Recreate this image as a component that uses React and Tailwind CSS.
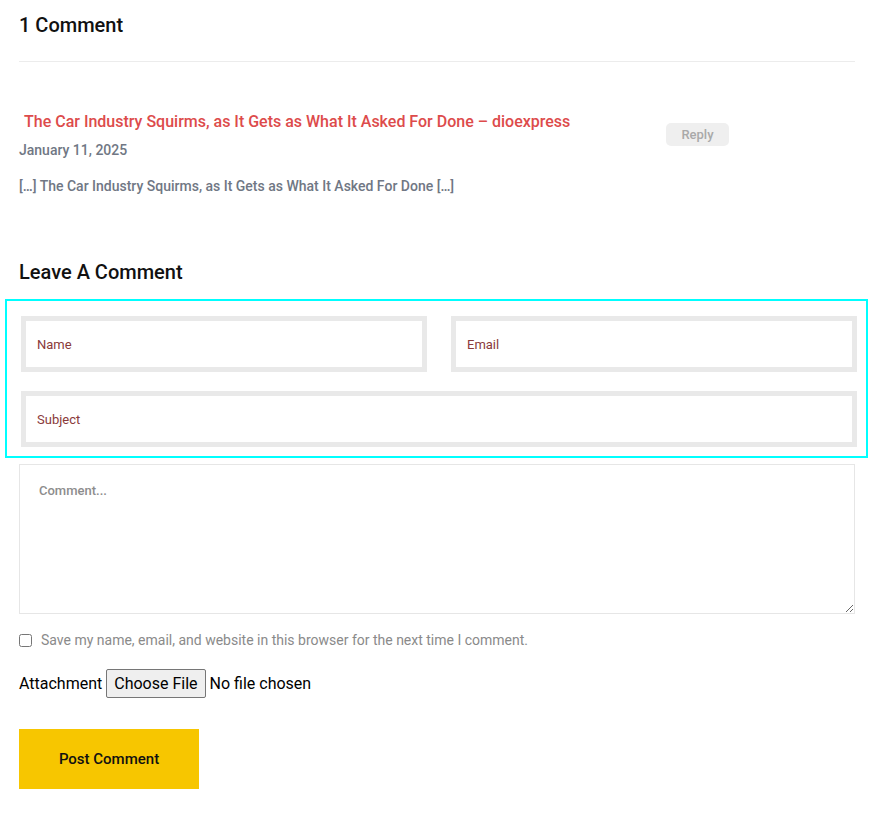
import React from 'react';

function App() {
  return (
    <div className="bg-white min-h-[821px] w-[873px] font-['Roboto',sans-serif] text-black">
      <div className="px-[19px] pt-[13px]">
        {/* Comments list */}
        <h3 className="text-[20px] font-medium leading-[24px] text-[#111]">1 Comment</h3>
        <div className="mt-[24px] h-px w-[836px] bg-[#ececec]" />

        <div className="mt-[49px] flex items-start">
          <div className="w-[647px]">
            <a href="#" className="block pl-[5px] text-[16px] font-medium leading-[22px] text-[#dd4b4b]">
              The Car Industry Squirms, as It Gets as What It Asked For Done – dioexpress
            </a>
            <div className="mt-[8px] text-[14px] font-medium leading-[18px] text-[#707784]">January 11, 2025</div>
            <p className="mt-[18px] text-[14px] font-medium leading-[18px] text-[#707784]">
              […] The Car Industry Squirms, as It Gets as What It Asked For Done […]
            </p>
          </div>
          <button className="mt-[12px] h-[23px] w-[63px] rounded-[5px] bg-[#efefef] text-[13px] font-medium text-[#a9a9a9]">
            Reply
          </button>
        </div>

        {/* Form */}
        <h3 className="mt-[65px] text-[20px] font-medium leading-[24px] text-[#111]">Leave A Comment</h3>
      </div>

      <div className="mt-[15px] ml-[5px] w-[863px] border-2 border-[#00ffff] pl-[14px] pr-[8px] pt-[15px] pb-[9px]">
        <div className="flex gap-[24px]">
          <input
            placeholder="Name"
            className="h-[56px] w-[406px] border-[5px] border-[#e9e9e9] px-[11px] text-[13px] outline-none placeholder:text-[#8a3a3a]"
          />
          <input
            placeholder="Email"
            className="h-[56px] w-[406px] border-[5px] border-[#e9e9e9] px-[11px] text-[13px] outline-none placeholder:text-[#8a3a3a]"
          />
        </div>
        <input
          placeholder="Subject"
          className="mt-[19px] block h-[56px] w-[836px] border-[5px] border-[#e9e9e9] px-[11px] text-[13px] outline-none placeholder:text-[#8a3a3a]"
        />
      </div>

      <div className="px-[19px]">
        <textarea
          placeholder="Comment..."
          className="mt-[6px] block h-[150px] w-[836px] border border-[#e6e6e6] px-[19px] py-[16px] text-[13px] font-medium outline-none placeholder:text-[#8d8d8d]"
        />

        <label className="mt-[17px] flex items-center gap-[9px] text-[14px] leading-[18px] text-[#8a8a8a]">
          <input type="checkbox" className="m-0 h-[13px] w-[13px]" />
          Save my name, email, and website in this browser for the next time I comment.
        </label>

        <div className="mt-[20px] flex items-center text-[16px] leading-[20px] text-black">
          <span className="mr-[4px]">Attachment</span>
          <input
            type="file"
            className="text-[16px] font-['Roboto',sans-serif] file:mr-[4px] file:h-[29px] file:rounded-[2px] file:border file:border-solid file:border-[#767676] file:bg-[#efefef] file:px-[7px] file:text-[16px] file:text-black"
          />
        </div>

        <button className="mt-[31px] h-[60px] w-[180px] bg-[#f7c600] text-[15px] font-medium text-[#111]">
          Post Comment
        </button>
      </div>
    </div>
  );
}

export default App;
